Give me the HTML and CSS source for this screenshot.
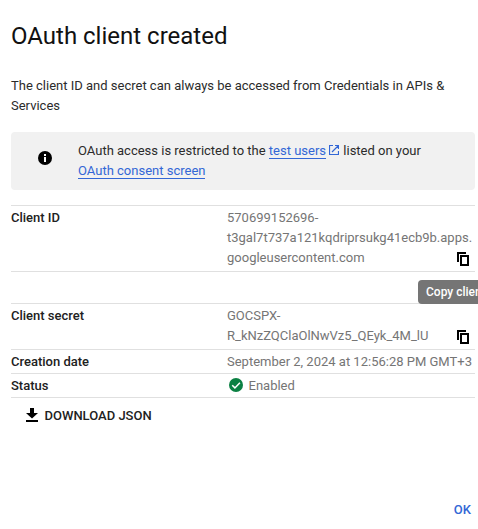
FILE: index.html
```html
<!DOCTYPE html>
<html lang="en">
<head>
<meta charset="utf-8">
<title>OAuth client created</title>
<link rel="stylesheet" href="styles.css">
</head>
<body>
<main class="dialog">
  <h1 class="title">OAuth client created</h1>
  <p class="intro">The client ID and secret can always be accessed from Credentials in APIs &amp; Services</p>
  <section class="notice">
    <svg class="notice-icon" viewBox="0 0 14 14"><circle cx="7" cy="7" r="7"/><path d="M6 3h2v2H6zM6 6h2v5H6z" fill="#fff"/></svg>
    <p class="notice-text">OAuth access is restricted to the <a class="link" href="#">test users</a><svg class="external" viewBox="0 0 10 10"><path d="M4 .5H.5v9h9V6M6 .5h3.500V4M9.500.5L3 7"/></svg> listed on your<br><a class="link" href="#">OAuth consent screen</a></p>
  </section>
  <dl class="details">
    <div class="row row-id">
      <dt>Client ID</dt>
      <dd>570699152696-<br>t3gal7t737a121kqdriprsukg41ecb9b.apps.<br>googleusercontent.com</dd>
      <button class="copy" aria-label="Copy"><svg viewBox="0 0 12 14"><path d="M1 10V1h8M4 4h7v9H4z"/></svg></button>
      <span class="tooltip">Copy client ID</span>
    </div>
    <div class="row row-gap"></div>
    <div class="row row-secret">
      <dt>Client secret</dt>
      <dd>GOCSPX-<br>R_kNzZQClaOlNwVz5_QEyk_4M_lU</dd>
      <button class="copy" aria-label="Copy"><svg viewBox="0 0 12 14"><path d="M1 10V1h8M4 4h7v9H4z"/></svg></button>
    </div>
    <div class="row">
      <dt>Creation date</dt>
      <dd>September 2, 2024 at 12:56:28 PM GMT+3</dd>
    </div>
    <div class="row">
      <dt>Status</dt>
      <dd class="status"><svg class="check" viewBox="0 0 14 14"><circle cx="7" cy="7" r="7"/><path d="M3.200 7.200l2.700 2.700 5-5.200"/></svg>Enabled</dd>
    </div>
  </dl>
  <button class="download"><svg viewBox="0 0 12 14"><path d="M4 0h4v5h4L6 10.500 0 5h4zM0 12h12v2H0z"/></svg>DOWNLOAD JSON</button>
  <footer class="actions"><button class="ok">OK</button></footer>
</main>
</body>
</html>
```

FILE: styles.css
```css
* { box-sizing: border-box; }

body {
  margin: 0;
  background: #fff;
  color: #2b2b2b;
  font: 13px/20px Roboto, sans-serif;
}

.dialog {
  display: flex;
  flex-direction: column;
  height: 529px;
  padding: 20px 3px 0 11px;
  overflow: hidden;
}

.title {
  margin: 0;
  color: #111;
  font-size: 24px;
  font-weight: 400;
  line-height: 32px;
}

.intro { margin: 24px 0 16px; }

.notice {
  display: flex;
  align-items: center;
  height: 58px;
  padding-left: 27px;
  border-radius: 4px;
  background: #f1f1f1;
}

.notice-icon {
  width: 14px;
  height: 14px;
  margin: -6px 26px 0 0;
}

.notice-text { margin: 0; white-space: nowrap; }

.link {
  display: inline-block;
  height: 18px;
  border-bottom: 1px solid #3367d6;
  color: #3367d6;
  text-decoration: none;
}

.external {
  width: 10px;
  height: 10px;
  margin: 0 1px 0 3px;
  fill: none;
  stroke: #3367d6;
  stroke-width: 1.2;
}

.details {
  margin: 15px 0 0;
  border-top: 1px solid #e0e0e0;
}

.row {
  position: relative;
  display: flex;
  height: 24px;
  padding-top: 2px;
  border-bottom: 1px solid #e0e0e0;
}

.row-id { height: 66px; }
.row-gap { height: 32px; }
.row-secret { height: 46px; }

dt {
  flex: none;
  width: 216px;
  color: #212121;
  font-weight: 500;
}

dd {
  margin: 0;
  color: #757575;
  white-space: nowrap;
}

button {
  padding: 0;
  border: 0;
  background: none;
  font: inherit;
}

.copy {
  position: absolute;
  right: 6px;
  bottom: 5px;
  width: 12px;
  height: 14px;
}

.copy svg {
  display: block;
  fill: none;
  stroke: #000;
  stroke-width: 2;
}

.tooltip {
  position: absolute;
  z-index: 1;
  top: 74px;
  left: 407px;
  height: 24px;
  padding: 2px 8px;
  border-radius: 4px;
  background: #757575;
  color: #fff;
  font-size: 12px;
  font-weight: 500;
  white-space: nowrap;
}

.status { display: flex; align-items: center; height: 20px; }

.check {
  width: 14px;
  height: 14px;
  margin: -2px 5.5px 0 2px;
  fill: #0b8043;
}

.check path { fill: none; stroke: #fff; stroke-width: 1.500; }

.download {
  display: flex;
  align-items: center;
  align-self: flex-start;
  gap: 6.5px;
  margin: 8px 0 0 15px;
  color: #212121;
  font-weight: 500;
}

.download svg {
  width: 12px;
  height: 14px;
  margin-top: -2px;
  fill: #000;
}

.actions {
  display: flex;
  justify-content: flex-end;
  margin: auto 4px 9px 0;
}

.ok { color: #3367d6; font-weight: 500; }
```
